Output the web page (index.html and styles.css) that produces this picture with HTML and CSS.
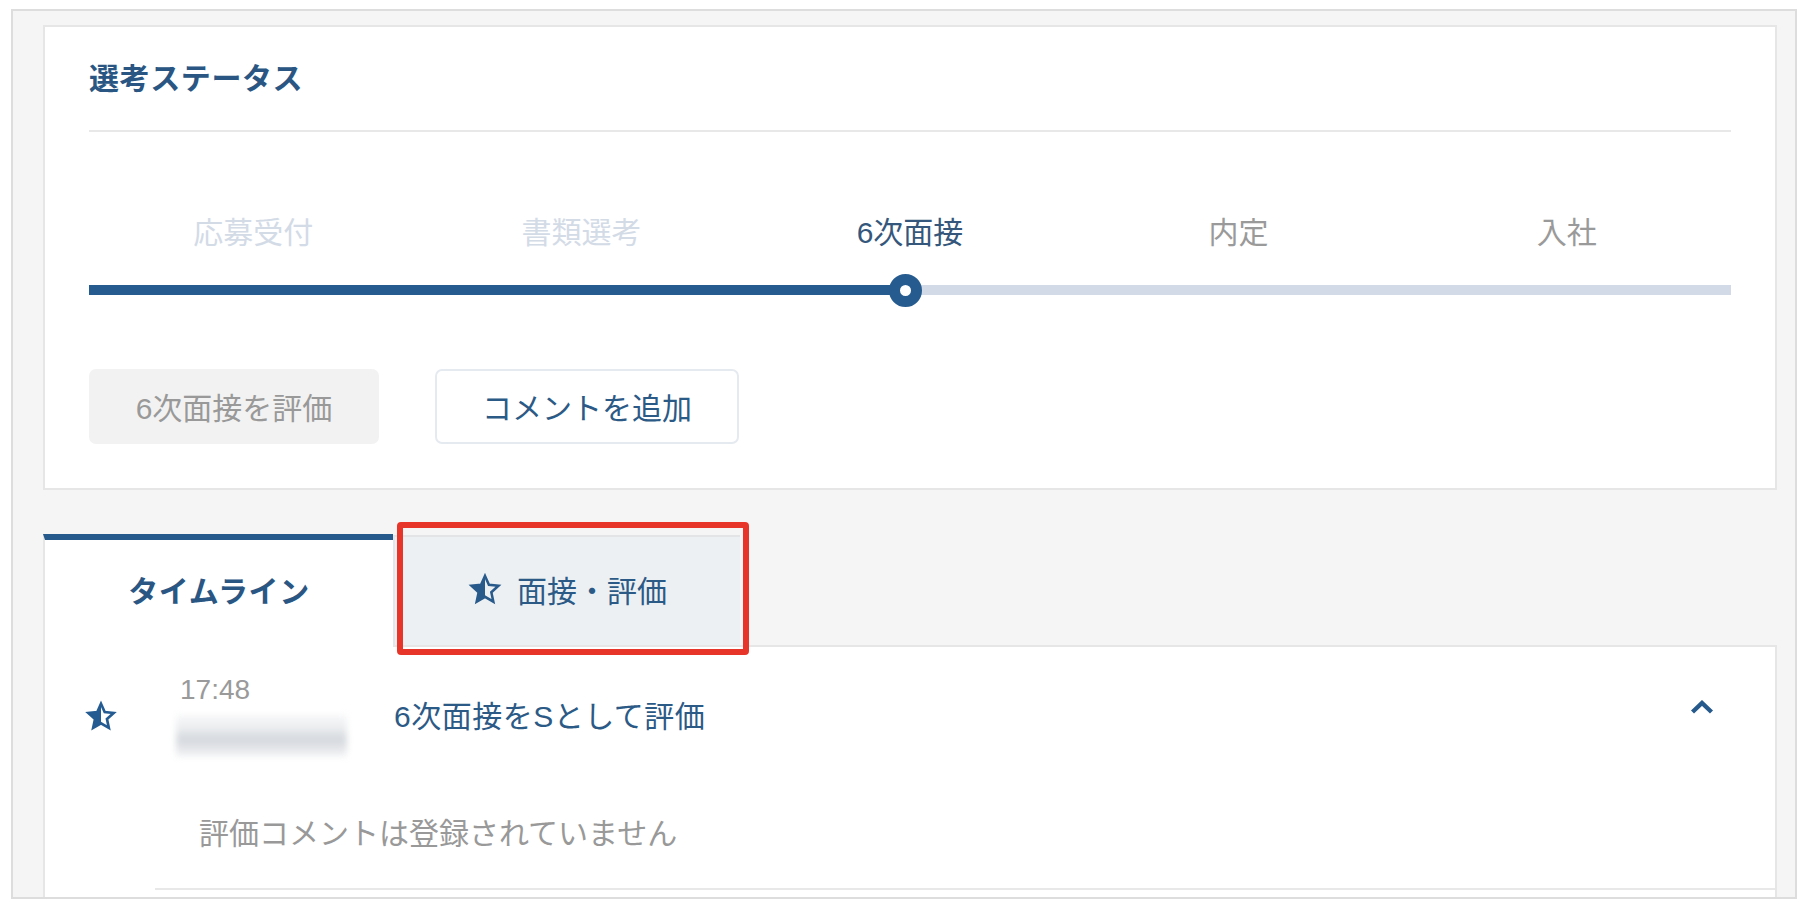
FILE: index.html
```html
<!DOCTYPE html>
<html lang="ja">
<head>
<meta charset="utf-8">
<title>選考ステータス</title>
<link rel="stylesheet" href="styles.css">
</head>
<body>
<div class="frame">
  <section class="status-card">
    <h2 class="status-title">選考ステータス</h2>
    <div class="steps">
      <div class="step-labels">
        <span class="step step-done">応募受付</span>
        <span class="step step-done">書類選考</span>
        <span class="step step-current">6次面接</span>
        <span class="step step-future">内定</span>
        <span class="step step-future">入社</span>
      </div>
      <div class="track">
        <div class="track-fill"></div>
        <div class="track-dot"></div>
      </div>
    </div>
    <div class="actions">
      <button class="btn btn-disabled" type="button">6次面接を評価</button>
      <button class="btn btn-outline" type="button">コメントを追加</button>
    </div>
  </section>

  <div class="tabs">
    <div class="tab tab-active">タイムライン</div>
    <div class="tab tab-inactive">
      <svg class="star star-tab" viewBox="0 0 24 24" aria-hidden="true">
        <defs><clipPath id="halfA"><rect x="-4" y="-4" width="16" height="32"/></clipPath></defs>
        <polygon points="12,2.8 14.76,9 21.51,9.71 16.47,14.25 17.88,20.89 12,17.5 6.12,20.89 7.53,14.25 2.49,9.71 9.24,9" fill="currentColor" clip-path="url(#halfA)"/>
        <polygon points="12,2.8 14.76,9 21.51,9.71 16.47,14.25 17.88,20.89 12,17.5 6.12,20.89 7.53,14.25 2.49,9.71 9.24,9" fill="none" stroke="currentColor" stroke-width="1.8" stroke-linejoin="miter"/>
      </svg>
      <span>面接・評価</span>
    </div>
    <div class="tab-rest"></div>
    <div class="highlight"></div>
  </div>

  <section class="timeline-card">
    <div class="tl-item">
      <div class="tl-head">
        <span class="tl-icon">
          <svg class="star star-item" viewBox="0 0 24 24" aria-hidden="true">
            <defs><clipPath id="halfB"><rect x="-4" y="-4" width="16" height="32"/></clipPath></defs>
            <polygon points="12,2.8 14.76,9 21.51,9.71 16.47,14.25 17.88,20.89 12,17.5 6.12,20.89 7.53,14.25 2.49,9.71 9.24,9" fill="currentColor" clip-path="url(#halfB)"/>
            <polygon points="12,2.8 14.76,9 21.51,9.71 16.47,14.25 17.88,20.89 12,17.5 6.12,20.89 7.53,14.25 2.49,9.71 9.24,9" fill="none" stroke="currentColor" stroke-width="2" stroke-linejoin="miter"/>
          </svg>
        </span>
        <div class="tl-meta">
          <div class="tl-time">17:48</div>
          <div class="tl-blur"></div>
        </div>
        <div class="tl-title">6次面接をSとして評価</div>
        <svg class="chev" viewBox="0 0 24 14" aria-hidden="true">
          <polyline points="2.5,12 12,3 21.5,12" fill="none" stroke="currentColor" stroke-width="4.4"/>
        </svg>
      </div>
      <div class="tl-body">評価コメントは登録されていません</div>
    </div>
  </section>
</div>
</body>
</html>
```

FILE: styles.css
```css
html, body {
  margin: 0;
  padding: 0;
  background: #ffffff;
}

body {
  font-family: "Liberation Sans", "Noto Sans CJK JP", sans-serif;
  color: #2c5a86;
}

.frame {
  box-sizing: border-box;
  margin: 9px 0 0 11px;
  width: 1786px;
  height: 890px;
  border: 2px solid #dddddd;
  background: #f5f5f5;
  padding: 14px 18px 0 30px;
  overflow: hidden;
  display: flex;
  flex-direction: column;
}

/* ---------- status card ---------- */
.status-card {
  background: #ffffff;
  border: 2px solid #e6e6e6;
  padding: 0 44px 44px;
}

.status-title {
  margin: 0;
  padding: 29px 0;
  font-size: 30px;
  line-height: 45px;
  font-weight: bold;
  letter-spacing: 0.6px;
  color: #2a5683;
  border-bottom: 2px solid #e8e8e8;
}

.steps {
  margin-top: 78px;
}

.step-labels {
  display: grid;
  grid-template-columns: repeat(5, 1fr);
  font-size: 30px;
  line-height: 45px;
  text-align: center;
}

.step-done { color: #d3dbe7; }
.step-current { color: #35577b; }
.step-future { color: #9a9a9a; }

.track {
  position: relative;
  margin-top: 30px;
  height: 10px;
  background: #d3dae7;
}

.track-fill {
  width: 49.7%;
  height: 100%;
  background: #265b8f;
}

.track-dot {
  position: absolute;
  left: 49.7%;
  top: 50%;
  box-sizing: border-box;
  width: 33px;
  height: 33px;
  margin: -16.5px 0 0 -16.5px;
  border: 11px solid #265b8f;
  border-radius: 50%;
  background: #ffffff;
}

.actions {
  display: flex;
  gap: 56px;
  margin-top: 74px;
}

.btn {
  box-sizing: border-box;
  height: 75px;
  border-radius: 7px;
  font-family: inherit;
  font-size: 30px;
  padding: 0 0 2px;
  cursor: pointer;
}

.btn-disabled {
  width: 290px;
  background: #f2f2f2;
  border: none;
  color: #999999;
}

.btn-outline {
  width: 304px;
  background: #ffffff;
  border: 2px solid #e5eaf1;
  color: #2c5a86;
}

/* ---------- tabs ---------- */
.tabs {
  position: relative;
  display: flex;
  margin-top: 44px;
  height: 113px;
}

.tab {
  box-sizing: border-box;
  display: flex;
  align-items: center;
  justify-content: center;
  font-size: 30px;
}

.tab-active {
  width: 350px;
  background: #ffffff;
  border-top: 6px solid #275a8c;
  border-left: 2px solid #e6e6e6;
  font-weight: bold;
  letter-spacing: 0.6px;
  color: #2a5683;
  padding-bottom: 10px;
}

.tab-inactive {
  width: 347px;
  margin-top: 1px;
  gap: 15px;
  background: #edf0f3;
  border-top: 2px solid #e3e4e6;
  border-left: 2px solid #e4e6e9;
  border-bottom: 2px solid #e6e6e6;
  color: #2c5a86;
  padding-bottom: 4px;
}

.tab-rest {
  flex: 1;
  border-bottom: 2px solid #e6e6e6;
}

.star {
  display: block;
  overflow: visible;
  color: #285a8b;
}

.star-tab {
  width: 34px;
  height: 34px;
}

.highlight {
  position: absolute;
  left: 354px;
  top: -12px;
  box-sizing: border-box;
  width: 352px;
  height: 133px;
  border: 6px solid #e8352a;
  border-radius: 4px;
  pointer-events: none;
}

/* ---------- timeline ---------- */
.timeline-card {
  flex: 1;
  background: #ffffff;
  border-left: 2px solid #e6e6e6;
  border-right: 2px solid #e6e6e6;
}

.tl-head {
  display: flex;
  align-items: center;
  padding-top: 28px;
}

.tl-icon {
  margin-left: 40px;
  width: 32px;
  height: 32px;
}

.star-item {
  width: 32px;
  height: 32px;
  color: #245c92;
}

.tl-meta {
  margin-left: 59px;
  width: 171px;
}

.tl-time {
  padding-left: 4px;
  font-size: 28px;
  line-height: 30px;
  color: #9a9a9a;
}

.tl-blur {
  margin-top: 10px;
  height: 42px;
  background: linear-gradient(180deg, #f7f8f9 0%, #eceef0 30%, #d4d8dd 58%, #e4e6e9 80%, #f6f7f8 100%);
  filter: blur(3px);
}

.tl-title {
  flex: 1;
  margin-left: 47px;
  font-size: 30px;
  line-height: 45px;
  letter-spacing: 0.5px;
  color: #2c5a86;
}

.chev {
  width: 24px;
  height: 14px;
  margin: 0 61px 18px 0;
  color: #275a8c;
}

.tl-body {
  margin-left: 110px;
  padding: 54px 0 32px 44px;
  font-size: 30px;
  line-height: 45px;
  color: #999999;
  border-bottom: 2px solid #e8e8e8;
}
```
